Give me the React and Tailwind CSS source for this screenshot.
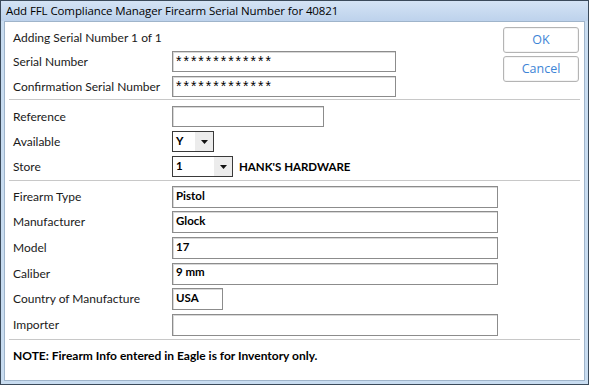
import React from "react";

const label = "text-[12px] text-[#1a1a1a] font-['Lato','Noto_Sans',sans-serif]";
const value = "text-[11.5px] font-bold text-black font-['Lato','Noto_Sans',sans-serif]";

function TextBox({ width, text, bold = true, height = "h-[21px]" }) {
    return (
        <div
            className={`${width} ${height} border border-[#8c8c8c] shadow-[inset_1px_1px_0_#d8d8d8] bg-white flex items-center px-[3px] pb-[3px]`}
        >
            <span className={bold ? value : "text-[14px] leading-[14px] text-black font-['Liberation_Sans',sans-serif] tracking-[2px] pt-[2px]"}>{text}</span>
        </div>
    );
}

function Select({ width, text }) {
    return (
        <div className={`${width} h-[21px] border border-[#3a3a3a] bg-white flex`}>
            <div className="flex-1 flex items-center px-[3px] pb-[2px]">
                <span className={value}>{text}</span>
            </div>
            <div className="w-[18px] bg-[#ececec] flex items-center justify-center">
                <svg width="7" height="4" viewBox="0 0 7 4">
                    <path d="M0 0h7L3.5 4z" fill="#111" />
                </svg>
            </div>
        </div>
    );
}

function Row({ name, children, h = "h-[25px]" }) {
    return (
        <div className={`flex items-center ${h}`}>
            <div className={`w-[167px] pl-[8px] ${label}`}>{name}</div>
            {children}
        </div>
    );
}

function Button({ children }) {
    return (
        <button className="w-[76px] h-[26px] rounded-[3px] border border-[#b4b4b4] bg-white text-[12.5px] text-[#3d84d6] font-['Open_Sans',sans-serif] shadow-[inset_0_0_0_1px_#f4f4f4]">
            {children}
        </button>
    );
}

export default function App() {
    return (
        <div className="w-[589px] h-[385px] border border-[#3b4a5a] bg-[#c8dcf0] flex flex-col">
            <div className="h-[20px] bg-gradient-to-b from-[#d4e3f4] to-[#bdd2ec] flex items-center pl-[5px]">
                <span className="text-[11.5px] text-black font-['Open_Sans',sans-serif] tracking-[-0.1px]">
                    Add FFL Compliance Manager Firearm Serial Number for 40821
                </span>
            </div>
            <div className="flex-1 mx-[3px] mb-[3px] bg-white border border-[#9fb4ca] flex flex-col pr-[4px]">
                <div className="flex">
                    <div className="flex-1 pt-[5px]">
                        <div className={`h-[22px] flex items-center pl-[8px] ${label}`}>Adding Serial Number 1 of 1</div>
                        <Row name="Serial Number">
                            <TextBox width="w-[224px]" text="*************" bold={false} />
                        </Row>
                        <Row name="Confirmation Serial Number">
                            <TextBox width="w-[224px]" text="*************" bold={false} />
                        </Row>
                    </div>
                    <div className="flex flex-col gap-[3px] pt-[5px] pr-[1px]">
                        <Button>OK</Button>
                        <Button>Cancel</Button>
                    </div>
                </div>
                <div className="h-px bg-[#c8c8c8] ml-[4px]" />
                <div className="pt-[4px]">
                    <Row name="Reference">
                        <TextBox width="w-[152px]" text="" />
                    </Row>
                    <Row name="Available">
                        <Select width="w-[42px]" text="Y" />
                    </Row>
                    <Row name="Store">
                        <Select width="w-[61px]" text="1" />
                        <span className={`${value} ml-[6px]`}>HANK'S HARDWARE</span>
                    </Row>
                </div>
                <div className="h-px bg-[#c8c8c8] ml-[4px] mt-[1px]" />
                <div className="pt-[3px]">
                    <Row name="Firearm Type" h="h-[25.6px]">
                        <TextBox width="w-[326px]" height="h-[22px]" text="Pistol" />
                    </Row>
                    <Row name="Manufacturer" h="h-[25.6px]">
                        <TextBox width="w-[326px]" height="h-[22px]" text="Glock" />
                    </Row>
                    <Row name="Model" h="h-[25.6px]">
                        <TextBox width="w-[326px]" height="h-[22px]" text="17" />
                    </Row>
                    <Row name="Caliber" h="h-[25.6px]">
                        <TextBox width="w-[326px]" height="h-[22px]" text="9 mm" />
                    </Row>
                    <Row name="Country of Manufacture" h="h-[25.6px]">
                        <TextBox width="w-[51px]" height="h-[22px]" text="USA" />
                    </Row>
                    <Row name="Importer" h="h-[25.6px]">
                        <TextBox width="w-[326px]" height="h-[22px]" text="" />
                    </Row>
                </div>
                <div className="h-px bg-[#c8c8c8] ml-[4px] mt-[1px]" />
                <div className={`pl-[8px] pt-[7px] ${value} text-[12px]`}>
                    NOTE: Firearm Info entered in Eagle is for Inventory only.
                </div>
            </div>
        </div>
    );
}
